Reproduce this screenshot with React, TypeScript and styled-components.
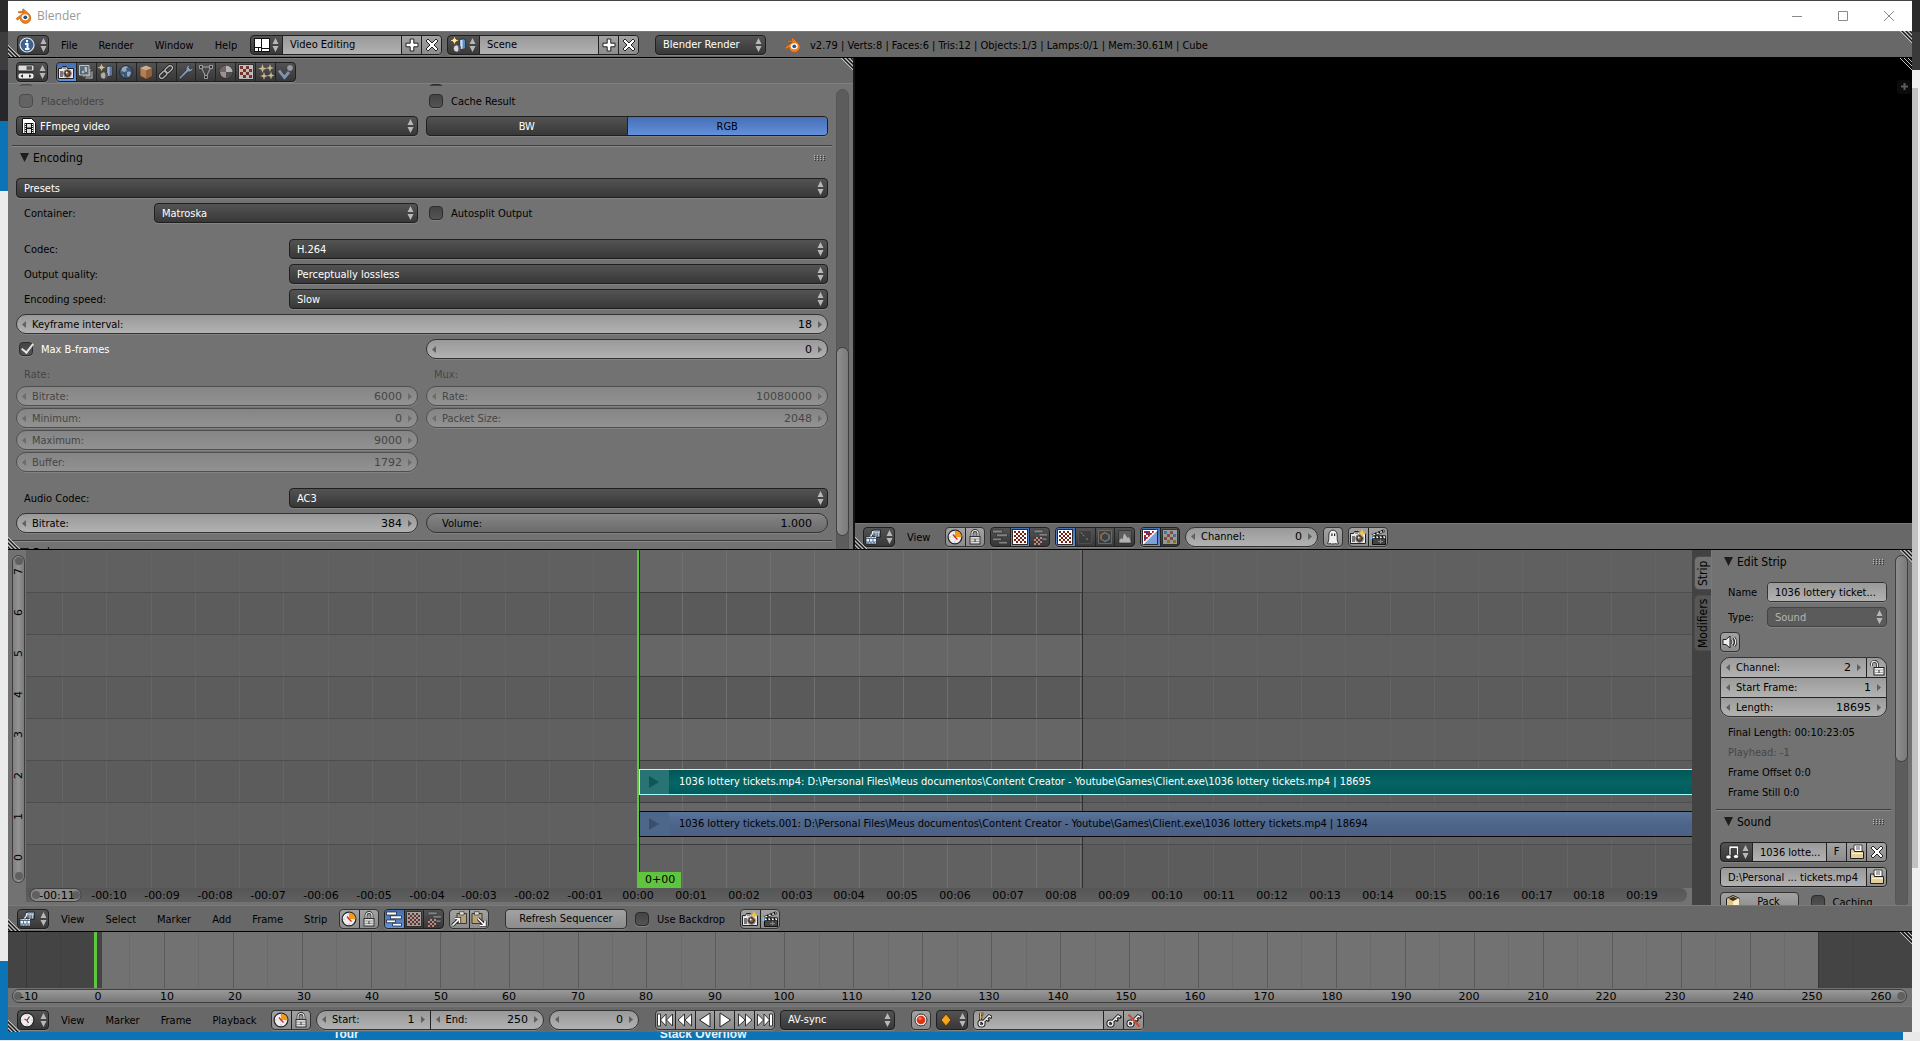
import React from "react";
import styled, { createGlobalStyle, css } from "styled-components";

const UI = '"DejaVu Sans Condensed", "DejaVu Sans", sans-serif';
const NUM = '"DejaVu Sans", sans-serif';

const GlobalStyle = createGlobalStyle`
  * { box-sizing: border-box; }
  body { margin: 0; overflow: hidden; }
  button, input, select { font: inherit; color: inherit; margin: 0; }
`;

/* ---------- desktop and window shell ---------- */

const Desktop = styled.div`
  height: 100vh;
  display: grid;
  grid-template-columns: 8px minmax(0, 1fr) 8px;
  grid-template-rows: minmax(0, 1fr) 8px 1px;
  font-family: ${UI};
  font-size: 11px;
  line-height: 14px;
  color: #000;
  background: #e9e9e9;
`;
const LeftEdge = styled.div`
  background: linear-gradient(#2b2b2b 32px, #3d3d3d 32px 70px, #25272b 70px 121px, #0a74b6 121px 191px, #ebebeb 191px 961px, #0a74b6 961px);
`;
const RightEdge = styled.div`
  background: linear-gradient(#2b2b2b 32px, #393939 32px 70px, #f0f0f0 70px);
`;
const PageScroll = styled.div`
  margin-top: 88px;
  width: 6px;
  height: 780px;
  background: #c1c1c1;
`;
const Window = styled.main`
  display: grid;
  min-width: 0;
  border-top: 1px solid #444;
  grid-template-rows: 30px 27px minmax(0, 492fr) minmax(0, 382fr) 100px;
`;
const Taskbar = styled.footer`
  grid-column: 1 / 4;
  display: flex;
  align-items: flex-end;
  gap: 301px;
  height: 8px;
  margin-right: 17px;
  padding-left: 333px;
  overflow: hidden;
  background: #0a74b6;
  font: bold 12px/12px "Liberation Sans", Arial, sans-serif;
`;
const PageLink = styled.a`
  color: #e8f1f8;
  text-decoration: none;
`;
const TitleBar = styled.header`
  display: flex;
  align-items: center;
  gap: 6px;
  padding: 0 17px 0 7px;
  background: #fff;
  color: #999;
  font: 12px/16px "Open Sans", "Noto Sans", sans-serif;
`;
const WindowButtons = styled.div`
  display: flex;
  gap: 34px;
  margin-left: auto;
`;
const WindowButton = styled.button`
  display: flex;
  padding: 0;
  border: 0;
  background: none;
`;

/* ---------- editors ---------- */

const Area = styled.section`
  position: relative;
  display: flex;
  flex-direction: column;
  min-width: 0;
  min-height: 0;
  border-bottom: 1px solid #000;
`;
const Bar = styled.header<{ $left?: number; $gap?: number }>`
  flex: none;
  display: flex;
  align-items: center;
  gap: ${(p) => p.$gap ?? 5}px;
  height: 26px;
  padding-left: ${(p) => p.$left ?? 9}px;
  background: #686868;
  border-top: 1px solid #7a7a7a;
  white-space: nowrap;
`;
const TabBar = styled(Bar)`
  padding-top: 2px;
  border-bottom: 1px solid #808080;
`;
const Upper = styled.div`
  display: grid;
  min-height: 0;
  grid-template-columns: minmax(0, 847fr) minmax(0, 1057fr);
`;
const PropertiesArea = styled(Area)`
  border-right: 2px solid #151515;
  background: #727272;
`;
const Gap = styled.span<{ $w: number }>`
  flex: 0 0 ${(p) => p.$w}px;
`;
const Menus = styled.nav<{ $w: number }>`
  display: flex;
  flex: 0 0 ${(p) => p.$w}px;
  gap: 21px;
  padding-left: 7px;
`;
const MenuButton = styled.button`
  padding: 2px 0 0;
  border: 0;
  background: none;
`;
const Info = styled.output`
  padding: 2px 0 0 5px;
`;

const dark = css`
  background: linear-gradient(#535353, #383838);
  border: 1px solid #1f1f1f;
  color: #fff;
`;
const light = css`
  background: linear-gradient(#999, #b2b2b2);
  border: 1px solid #333;
  color: #000;
`;
const tool = css`
  background: linear-gradient(#a2a2a2, #8c8c8c);
  border: 1px solid #333;
  color: #000;
`;
const skins = { dark, light, tool };

const Cluster = styled.div<{ $w?: number; $skin?: keyof typeof skins; $round?: number }>`
  display: flex;
  flex: ${(p) => (p.$w ? `0 0 ${p.$w}px` : "1 1 0")};
  min-width: 0;
  height: 20px;
  border-radius: ${(p) => p.$round ?? 4}px;
  overflow: hidden;
  box-shadow: 0 1px 0 #838383;
  ${(p) => skins[p.$skin ?? "dark"]}
  && > * + * { border-left: 1px solid #222; }
`;
const Cell = styled.button<{ $on?: boolean; $skin?: keyof typeof skins; $w?: number; $dim?: boolean }>`
  display: flex;
  align-items: center;
  justify-content: center;
  gap: 2px;
  flex: ${(p) => (p.$w ? `0 0 ${p.$w}px` : "1 1 0")};
  min-width: 0;
  padding: 0;
  background: none;
  ${(p) => p.$skin && skins[p.$skin]}
  border: 0;
  ${(p) => p.$on && css`background: linear-gradient(#466fb4, #6390dc); color: #000;`}
  > svg { opacity: ${(p) => (p.$dim ? 0.72 : 1)}; }
`;
const ChoiceCell = styled(Cell)`
  padding-top: 2px;
`;
const TypeButton = styled.button`
  display: flex;
  align-items: center;
  justify-content: center;
  gap: 5px;
  flex: 0 0 32px;
  height: 20px;
  padding: 0;
  border-radius: 4px;
  box-shadow: 0 1px 0 #838383;
  ${dark}
`;
const NameInput = styled.input`
  flex: 1 1 0;
  min-width: 0;
  padding: 1px 1px 0 7px;
  border: 0;
  background: linear-gradient(#999, #b2b2b2);
  color: #000;
`;
const Push = styled.button<{ $w?: number }>`
  display: flex;
  align-items: center;
  justify-content: center;
  flex: 0 0 ${(p) => p.$w ?? 20}px;
  width: ${(p) => p.$w ?? 20}px;
  height: 20px;
  padding: 0;
  border-radius: 4px;
  box-shadow: 0 1px 0 #838383;
  ${tool}
`;

const SelectBox = styled.span<{ $w?: number; $muted?: boolean }>`
  display: flex;
  align-items: center;
  flex: ${(p) => (p.$w ? `0 0 ${p.$w}px` : "1 1 0")};
  min-width: 0;
  height: 20px;
  padding: 0 3px 0 4px;
  border-radius: 4px;
  box-shadow: 0 1px 0 #838383;
  ${dark}
  ${(p) => p.$muted && css`background: #5b5b5b; border-color: #434343; color: #b5b5b5;`}
`;
const NativeSelect = styled.select`
  appearance: none;
  flex: 1 1 0;
  min-width: 0;
  height: 18px;
  padding: 1px 3px 0;
  border: 0;
  background: none;
  opacity: 1;
`;

const NumberBox = styled.label<{ $w?: number; $muted?: boolean; $flat?: boolean; $plain?: boolean }>`
  display: flex;
  align-items: center;
  flex: ${(p) => (p.$w ? `0 0 ${p.$w}px` : "1 1 0")};
  min-width: 0;
  height: 20px;
  padding: 0 5px;
  border-radius: 10px;
  box-shadow: 0 1px 0 #838383;
  ${light}
  ${(p) => p.$muted && css`background: linear-gradient(#858585, #929292); border-color: #4f4f4f; color: #454545;`}
  ${(p) => p.$plain && css`background: linear-gradient(#858585, #6b6b6b);`}
  ${(p) => p.$flat && css`height: auto; border-width: 0; border-radius: 0; box-shadow: none; background: none;`}
`;
const NumberInput = styled.input`
  flex: 1 1 0;
  min-width: 0;
  padding: 1px 6px 0 0;
  border: 0;
  background: none;
  text-align: right;
  font-family: ${NUM};
`;
const NumberName = styled.span`
  padding: 1px 0 0 6px;
`;
const Arrow = styled.svg<{ $faint?: boolean }>`
  flex: none;
  fill: ${(p) => (p.$faint ? "#6c6c6c" : "#606060")};
`;

const CheckLabel = styled.label<{ $muted?: boolean; $white?: boolean }>`
  display: flex;
  align-items: center;
  flex: 1 1 0;
  gap: 8px;
  min-width: 0;
  height: 20px;
  padding-left: 3px;
  color: ${(p) => (p.$muted ? "#444" : p.$white ? "#fff" : "#000")};
`;
const BackdropLabel = styled(CheckLabel)`
  flex: 0 0 103px;
`;
const CheckBox = styled.input`
  appearance: none;
  flex: none;
  position: relative;
  width: 14px;
  height: 14px;
  border: 1px solid #2c2c2c;
  border-radius: 4px;
  background: linear-gradient(#444, #545454);
  box-shadow: 0 1px 0 #828282;
  &:disabled { background: #636363; border-color: #4c4c4c; }
  &:checked::after {
    content: "";
    position: absolute;
    left: 4px;
    top: -2px;
    width: 5px;
    height: 10px;
    border: solid #e3e3e3;
    border-width: 0 2px 2px 0;
    transform: rotate(38deg);
  }
`;
const CheckText = styled.span`
  padding-top: 2px;
`;

/* ---------- properties ---------- */

const PanelScroll = styled.div`
  flex: 1 1 0;
  min-height: 0;
  display: grid;
  grid-template-columns: minmax(0, 1fr) 13px;
  column-gap: 4px;
  padding-right: 4px;
  overflow: hidden;
`;
const Form = styled.form`
  display: flex;
  flex-direction: column;
  gap: 5px;
  padding: 0 4px 0 8px;
  min-width: 0;
`;
const Row = styled.div`
  display: grid;
  flex: none;
  grid-auto-flow: column;
  grid-auto-columns: minmax(0, 1fr);
  column-gap: 8px;
  min-height: 20px;
`;
const ClippedRow = styled(Row)`
  min-height: 0;
  height: 2px;
  overflow: hidden;
  align-items: end;
  padding: 0 3px;
  column-gap: 14px;
`;
const LabelRow = styled.div`
  display: flex;
  flex: none;
  min-width: 0;
  min-height: 20px;
`;
const Stack = styled.div`
  min-width: 0;
  display: flex;
  flex-direction: column;
  gap: 2px;
  > * { flex: 0 0 20px; }
`;
const FieldLabel = styled.label<{ $part?: number; $muted?: boolean }>`
  display: flex;
  align-items: center;
  flex: ${(p) => (p.$part ? `0 0 ${p.$part}px` : "none")};
  height: 20px;
  padding: 2px 0 0 8px;
  color: ${(p) => (p.$muted ? "#464646" : "#000")};
`;
const PanelTitle = styled.h2<{ $line?: number }>`
  display: flex;
  align-items: center;
  flex: none;
  gap: 4px;
  margin: ${(p) => p.$line ?? 0}px -4px 0;
  height: ${(p) => (p.$line ? 28 : 27)}px;
  padding: 0 7px 4px 8px;
  ${(p) => p.$line && css`
    border-top: 1px solid #3c3c3c;
    box-shadow: inset 0 1px 0 #8a8a8a;
  `}
  font-size: 12px;
  font-weight: normal;
  > :last-child { margin-left: auto; }
`;
const Track = styled.div<{ $pad: string }>`
  margin: ${(p) => p.$pad};
  border-radius: 7px;
  background: #5c5c5c;
  border: 1px solid #565656;
`;
const Thumb = styled.div<{ $top: number; $size: number }>`
  height: ${(p) => p.$size}%;
  margin: ${(p) => p.$top}px -1px 0;
  border: 1px solid #3f3f3f;
  border-radius: 7px;
  background: linear-gradient(90deg, #8f8f8f, #7a7a7a);
`;

/* ---------- preview, sequencer, timeline ---------- */

const Preview = styled.div`
  flex: 1 1 0;
  background: #000;
`;
const Expand = styled.button`
  position: absolute;
  top: 22px;
  right: 1px;
  width: 14px;
  height: 14px;
  padding: 0;
  border: 0;
  border-radius: 4px;
  background: #0b0b0b;
`;
const Corner = styled.svg<{ $at: "tr" | "bl" }>`
  position: absolute;
  width: 12px;
  height: 12px;
  ${(p) => (p.$at === "tr" ? "top: 0; right: 0;" : "bottom: 0; left: 0;")}
`;
const SeqBody = styled.div`
  flex: 1 1 0;
  min-height: 0;
  display: grid;
  grid-template-columns: 18px minmax(0, 1fr) 19px 201px;
  background: #727272;
`;
const ChannelBar = styled.div`
  display: flex;
  flex-direction: column;
  align-items: center;
  gap: 8px;
  margin: 5px 1px 22px 4px;
  padding: 1px 0 2px;
  border: 1px solid #3f3f3f;
  border-radius: 7px;
  background: linear-gradient(90deg, #7f7f7f, #939393, #7a7a7a);
`;
const Channels = styled.ol`
  flex: 1 1 0;
  display: flex;
  flex-direction: column;
  justify-content: space-between;
  margin: -7px 0 0;
  padding: 0;
  list-style: none;
  font-family: ${NUM};
`;
const ChannelName = styled.li`
  height: 12px;
  display: flex;
  justify-content: center;
  writing-mode: vertical-rl;
  transform: rotate(180deg);
  line-height: 12px;
`;
const Knob = styled.span`
  flex: none;
  width: 8px;
  height: 8px;
  border-radius: 50%;
  background: #606060;
`;
const SeqMain = styled.div`
  display: grid;
  grid-template-rows: minmax(0, 1fr) 17px;
  min-width: 0;
`;
const Canvas = styled.div`
  position: relative;
  overflow: hidden;
  background: #5c5c5c;
`;
const Plot = styled.svg`
  display: block;
  width: 100%;
  height: 100%;
  font-family: ${NUM};
  font-size: 11px;
`;
const Strip = styled.button<{ $row: number; $sel?: boolean }>`
  position: absolute;
  left: 613px;
  right: -2px;
  top: ${(p) => 219 + p.$row * 42}px;
  height: 26px;
  display: flex;
  align-items: stretch;
  gap: 10px;
  padding: 0;
  text-align: left;
  white-space: nowrap;
  border: 1px solid ${(p) => (p.$sel ? "#a6ffff" : "#0a0a0a")};
  background: ${(p) => (p.$sel ? "linear-gradient(#015757, #056464 50%, #005c5c)" : "linear-gradient(#5a7398, #4d6589 50%, #4b6084)")};
  color: ${(p) => (p.$sel ? "#fff" : "#000")};
`;
const Handle = styled.span<{ $sel?: boolean }>`
  display: flex;
  flex: 0 0 29px;
  padding-left: 9px;
  align-items: center;
  background: ${(p) => (p.$sel ? "#287474" : "#4d678b")};
`;
const StripText = styled.span`
  align-self: center;
`;
const Playhead = styled.div`
  position: absolute;
  left: 611px;
  top: 0;
  bottom: 0;
  border-left: 2px solid #5fc43e;
  display: flex;
  align-items: flex-end;
`;
const FrameTag = styled.span`
  height: 16px;
  padding: 1px 6px 0;
  background: #5fc43e;
  font-family: ${NUM};
`;
const SeqRuler = styled.div`
  margin-right: 5px;
  height: 14px;
  border-radius: 0 7px 7px 0;
  background: linear-gradient(#565656, #606060);
`;
const Tabs = styled.div`
  display: flex;
  flex-direction: column;
  gap: 5px;
  padding: 6px 0 0 2px;
  background: #424242;
`;
const Tab = styled.button<{ $on?: boolean; $h: number }>`
  height: ${(p) => p.$h}px;
  padding: 0;
  writing-mode: vertical-rl;
  transform: rotate(180deg);
  border: 1px solid #4d4d4d;
  border-left: 0;
  border-radius: 0 5px 5px 0;
  background: ${(p) => (p.$on ? "#727272" : "#565656")};
  font-size: 12px;
`;
const Side = styled.aside`
  display: grid;
  min-height: 0;
  overflow: hidden;
  grid-template-columns: minmax(0, 1fr) 13px;
  column-gap: 4px;
  padding-right: 4px;
  border-left: 1px solid #7a7a7a;
`;
const Triple = styled.div`
  flex: none;
  display: grid;
  grid-template-columns: minmax(0, 1fr);
  grid-template-rows: 19px 20px 19px;
  border-radius: 10px;
  overflow: hidden;
  box-shadow: 0 1px 0 #838383;
  border: 1px solid #333;
`;
const TripleRow = styled.div`
  display: flex;
  min-width: 0;
  background: linear-gradient(#9c9c9c, #b2b2b2);
  & + & { border-top: 1px solid #222; }
  && > * + * { border-left: 1px solid #222; }
`;
const Facts = styled.div`
  display: flex;
  flex-direction: column;
  flex: none;
`;
const TimeBody = styled.div`
  flex: none;
  height: 56px;
  background: #444;
`;
const TimeRuler = styled.div`
  flex: none;
  height: 18px;
  padding: 1px 5px 3px 4px;
  background: #727272;
`;
const TimePill = styled.div`
  height: 14px;
  border: 1px solid #3f3f3f;
  border-radius: 7px;
  background: linear-gradient(#999, #777);
`;
const TimelineArea = styled(Area)`
  border-bottom: 0;
`;
const KeyInput = styled.input`
  &&& { border: 0; }
  flex: 1 1 0;
  min-width: 0;
  background: none;
`;
const Glyph = styled.svg`
  flex: none;
`;

/* ---------- icons ---------- */

const UpDown = () => (
  <Glyph width="7" height="14" viewBox="0 0 7 14" aria-hidden="true" fill="#b8b8b8">
    <path d="M3.500 0 6.500 6H.5zM3.500 14 6.500 8H.5z" />
  </Glyph>
);
const Checker = ({ a = "#fff", b = "#7a1f14", x = 2, y = 2, s = 2, n = 6, frame = true }: { a?: string; b?: string; x?: number; y?: number; s?: number; n?: number; frame?: boolean }) => (
  <g shapeRendering="crispEdges">
    {frame && <rect x={x - 2} y={y - 2} width={n * s + 4} height={n * s + 4} fill="#2a2a2a" />}
    {frame && <rect x={x - 1} y={y - 1} width={n * s + 2} height={n * s + 2} fill={a} />}
    <rect x={x} y={y} width={n * s} height={n * s} fill={a} />
    {Array.from({ length: n * n }, (_, i) => {
      const c = i % n, r = Math.floor(i / n);
      return (c + r) % 2 ? null : <rect key={i} x={x + c * s} y={y + r * s} width={s} height={s} fill={b} />;
    })}
  </g>
);
const CameraShape = () => (
  <g>
    <path d="M.5 4.500h3l1-2h4l1 2h6v10H.5z" fill="#e8e8e8" stroke="#222" />
    <path d="M2 7h3v6H2z" fill="#777" />
    <circle cx="9.500" cy="9.500" r="3.900" fill="#333" stroke="#999" />
    <circle cx="9.500" cy="9.500" r="2" fill="#a0522d" />
    <circle cx="8.700" cy="8.500" r=".9" fill="#fff" />
    <path d="M5 3.500h3v1H5z" fill="#444" />
  </g>
);
const ClockShape = ({ slice }: { slice?: boolean }) => (
  <g>
    <circle cx="8" cy="8" r="6.900" fill="#eee" stroke="#222" strokeWidth="1.200" />
    {slice && <path d="M8 8V1.500A6.500 6.500 0 0 1 14.500 8z" fill="#f79a10" />}
    {slice && <path d="M8 8 6 5.500M8 8l2.500 2.500" stroke="#c22" strokeWidth="1.300" />}
    {!slice && <path d="M8 8.500 10.500 4.500M8 8.500l1.500 2.500" stroke="#444" strokeWidth="1.200" />}
    {!slice && <path d="M8 8.500 5.500 7" stroke="#c22" strokeWidth="1.200" />}
    <path d="M8 2.500v1M8 12.500v1M2.500 8h1M12.500 8h1" stroke="#999" />
  </g>
);
const FilmShape = () => (
  <g strokeWidth=".7">
    <path d="M7 1.500c3-1 5 0 8.500-.5v7c-2 .5-3 .5-5 .2-1.500 0-2 .8-2.500 1.300z" fill="#5f7690" stroke="#111" />
    <path d="M1 7.500h10.500V15H1z" fill="#e9f2fa" stroke="#111" />
    <path d="M1 9.500h10.500M1 13h10.500M4.500 9.500V13M8 9.500V13M3 7.500v2M6 7.500v2M9 7.500v2M3 13v2M6 13v2M9 13v2" fill="none" stroke="#24476b" />
    <path d="M8.500 2.200h6.500M9 3.700h6M11 3.500v4.500M13.500 3.500v4" fill="none" stroke="#dfe8f0" />
    <path d="M8 2c0 3-1 4-2.500 5.500" fill="none" stroke="#eee" strokeWidth="1.500" />
  </g>
);
const BarsShape = ({ dim }: { dim?: boolean }) => (
  <g fill={dim ? "#999" : "#fff"} stroke={dim ? "#2c2c2c" : "#16263c"} strokeWidth=".8">
    <path d="M.5 1h10v3H.5zM4.500 4.800h11v3h-11zM.5 9h9v2.700H.5zM6.500 12.300h9V15h-9z" />
  </g>
);
const SplitShape = () => (
  <g>
    <path d="M2 1h9v2.700H2zM7 4.500h8.500V7H7zM10 9h5v2.300h-5z" fill="#999" stroke="#2c2c2c" strokeWidth=".6" />
    <Checker a="#c5b5b0" b="#6b2a22" x={2} y={8} s={2} n={4} frame={false} />
  </g>
);
const Star = ({ x, y, r, c = "#f4c542" }: { x: number; y: number; r: number; c?: string }) => (
  <path d={`M${x} ${y - r}L${x + r / 4} ${y - r / 4} ${x + r} ${y} ${x + r / 4} ${y + r / 4} ${x} ${y + r} ${x - r / 4} ${y + r / 4} ${x - r} ${y} ${x - r / 4} ${y - r / 4}z`} fill={c} />
);
const KeyShape = ({ x = 0 }: { x?: number }) => (
  <g transform={`translate(${x} 0)`} fill="none">
    <path d="M5.500 10.500 12 4l2 1M9.500 6.500l1.500 1.500" stroke="#222" strokeWidth="3.200" strokeLinecap="round" />
    <circle cx="4.500" cy="11.500" r="2.600" stroke="#222" strokeWidth="3" />
    <path d="M5.500 10.500 12 4l2 1M9.500 6.500l1.500 1.500" stroke="#eee" strokeWidth="1.500" />
    <circle cx="4.500" cy="11.500" r="2.400" stroke="#eee" strokeWidth="1.400" />
  </g>
);

const icons: Record<string, React.ReactNode> = {
  info: <><circle cx="8" cy="8" r="7" fill="#3c6291" stroke="#dbe6f2" strokeWidth="1.200" /><path d="M8 3v2.200M6 7h2.500v4.500M6 12h4.500" stroke="#fff" strokeWidth="2" fill="none" /></>,
  layout: <g shapeRendering="crispEdges"><path d="M0 1h16v14H0z" fill="#111" /><path d="M1 2h6v8H1zM1 11h3v3H1zM5 11h2v3H5zM8 2h7v9H8zM8 12h7v2H8z" fill="#fff" /></g>,
  plus: <path d="M6.200 2h3.600v4.200H14v3.600H9.800V14H6.200V9.800H2V6.200h4.200z" fill="#fff" stroke="#222" />,
  cross: <path d="M2 4l2-2 4 4 4-4 2 2-4 4 4 4-2 2-4-4-4 4-2-2 4-4z" fill="#fff" stroke="#222" />,
  scene: <><Star x={3.5} y={3.5} r={4} c="#ffdf7a" /><circle cx="3.500" cy="3.500" r="1.800" fill="#ffe9a0" /><path d="M9 2.500q2.700-1.500 5.500 0v9q-2.500 1.500-5.500 0z" fill="#5b8cc8" stroke="#222" strokeWidth=".7" /><path d="M9.300 3h2.200v9H9.300z" fill="#cfe0f5" /><circle cx="6" cy="11.500" r="3.700" fill="#d9d9d9" stroke="#222" strokeWidth=".7" /><path d="M6 7.800a3.700 3.700 0 0 1 0 7.400c2-2 2-5 0-7.400" fill="#555" /></>,
  logo: <><path d="M1 10.500 8.500 5H3.500V3.500h4.700L7 2l1.300-1.200 6 5.200A5.500 5.500 0 1 1 5 10.200L2.500 12.200z" fill="#ef7f1a" stroke="#8c3b00" strokeWidth=".4" /><ellipse cx="10.200" cy="9.300" rx="3.500" ry="3" fill="#fff" /><circle cx="10.300" cy="9.300" r="1.900" fill="#265787" /></>,
  props: <><rect x="0" y="1" width="16" height="6" rx="1.500" fill="#ddd" stroke="#111" strokeWidth=".8" /><path d="M8.500 2.200H14v3.600H8.500z" fill="#555" /><rect x="0" y="9" width="16" height="6" rx="2" fill="#eee" stroke="#111" strokeWidth=".8" /><path d="M5 10.200v3.600L2.500 12zM11 10.200v3.600l2.500-1.800z" fill="#222" /></>,
  camera: <CameraShape />,
  layers: <><path d="M7 7h8v8H7zM4.500 4.500H13V13H4.500z" fill="#ccc" stroke="#333" strokeWidth=".7" /><path d="M1.500 1.500h9.500v9.500H1.500z" fill="#5d7894" stroke="#eee" /><path d="M6.500 3h2.500v5H6.500z" fill="#dfe9f5" /><circle cx="5" cy="8" r="2" fill="#ddd" stroke="#222" strokeWidth=".5" /></>,
  world: <><circle cx="8" cy="8" r="6.500" fill="#39608f" stroke="#16263c" /><path d="M4 4c2-2 5-2 6-1l-2 2 1 2-3 1-2-1-1 2zM9 8c2-1 4 0 4 1l-2 4-2-1zM4 10l2 1v2z" fill="#b7cbe0" /></>,
  cube: <><path d="M8 1.500 14 4v8l-6 3-6-3V4z" fill="#d99663" stroke="#5b3212" strokeWidth=".8" /><path d="M8 1.500 14 4 8 6.500 2 4z" fill="#f5d5b4" /><path d="M8 6.500V15l6-3V4z" fill="#b36a35" /></>,
  link: <g fill="none" stroke="#111" strokeWidth="3"><rect x="1" y="8.500" width="8.500" height="4.500" rx="2.200" transform="rotate(-45 5.250 10.750)" /><rect x="6.500" y="3" width="8.500" height="4.500" rx="2.200" transform="rotate(-45 10.750 5.250)" /><g stroke="#ddd" strokeWidth="1.400"><rect x="1" y="8.500" width="8.500" height="4.500" rx="2.200" transform="rotate(-45 5.250 10.750)" /><rect x="6.500" y="3" width="8.500" height="4.500" rx="2.200" transform="rotate(-45 10.750 5.250)" /></g></g>,
  wrench: <path d="M2.200 15.200.8 13.800 8.200 6C7.500 3.500 9.500.8 12.500 1L10.800 3.500l1.700 1.700L15 3.500C15.300 6.500 12.500 8.500 10 7.800z" fill="#a3bfe6" stroke="#1a2a40" strokeWidth=".8" />,
  mesh: <><path d="M3 3h10L8 13z" fill="none" stroke="#ccc" /><path d="M1.500 1.500h3v3h-3zM11.500 1.500h3v3h-3zM6.500 11.500h3v3h-3z" fill="#222" stroke="#ddd" strokeWidth=".8" /></>,
  material: <><circle cx="8" cy="8" r="6.500" fill="#c9aea4" stroke="#222" /><path d="M8 1.500V8H1.500A6.500 6.500 0 0 1 8 1.500" fill="#777" /><path d="M8 8h6.500A6.500 6.500 0 0 1 8 14.500z" fill="#555" /><path d="M8 1.500A6.500 6.500 0 0 1 14.500 8H8z" fill="#ddd" /></>,
  texture: <Checker a="#eee" b="#8c2f22" s={3} n={4} />,
  particles: <><Star x={4.5} y={4.5} r={4.5} c="#f5e3b0" /><Star x={12} y={4} r={4} c="#f5e3b0" /><Star x={6} y={12} r={4} c="#f5e3b0" /><Star x={13} y={11.5} r={4} c="#f5e3b0" /></>,
  physics: <><path d="M1 6.500 6.500 13.500 11 8" fill="none" stroke="#94b5e0" strokeWidth="2.800" /><circle cx="12" cy="4" r="3.400" fill="#bbb" stroke="#222" strokeWidth=".7" /></>,
  filmfile: <><path d="M1.500.5h9l4 4v11h-13z" fill="#fff" stroke="#111" /><path d="M3.500 5h9v10.500h-9z" fill="#111" /><path d="M6 6h4v3.500H6zM6 11h4v4H6z" fill="#ddd" /><path d="M4.500 6v9M11.500 6v9" stroke="#fff" strokeDasharray="1 1" /></>,
  film: <FilmShape />,
  clockslice: <ClockShape slice />,
  clock: <ClockShape />,
  lock: <><path d="M5 8V4.500a3 3 0 0 1 6 0V8" fill="none" stroke="#333" strokeWidth="2.800" /><path d="M5 8V4.500a3 3 0 0 1 6 0V8" fill="none" stroke="#eee" strokeWidth="1.200" /><rect x="3" y="7.500" width="10" height="7.500" fill="#ddd" stroke="#333" /><path d="M4 10h8M4 12.500h8" stroke="#999" /><path d="M7.500 10h1v3h-1z" fill="#333" /></>,
  unlock: <><path d="M8.500 8V5a3 3 0 0 0-6-1v2" fill="none" stroke="#333" strokeWidth="2.800" /><path d="M8.500 8V5a3 3 0 0 0-6-1v2" fill="none" stroke="#eee" strokeWidth="1.200" /><rect x="5" y="7.500" width="10" height="7.500" fill="#eee" stroke="#222" /><path d="M6 10h8M6 12.500h8" stroke="#aaa" /><path d="M9.500 10h1v3h-1z" fill="#333" /></>,
  bars: <BarsShape />,
  barsdim: <BarsShape dim />,
  split: <SplitShape />,
  checker: <Checker />,
  checkerdim: <Checker a="#c8c0be" b="#6f2f26" />,
  wave: <><path d="M1.500 1.500h13v13h-13z" fill="#3a3a3a" stroke="#555" /><path d="M4 3.500 8 8M9 10h3" stroke="#aaa" strokeDasharray="2 1" /></>,
  vector: <><path d="M1.500 1.500h13v13h-13z" fill="#3d3d3d" stroke="#777" /><path d="M8 3.500l4 2.500v4l-4 2.500-4-2.500V6z" fill="none" stroke="#7d9a5f" strokeWidth="1.300" /><path d="M8 3.500 4 6v4" fill="none" stroke="#c56a4c" strokeWidth="1.300" /><path d="M12 6v4l-4 2.500" fill="none" stroke="#5f8ab5" strokeWidth="1.300" /></>,
  histogram: <><path d="M1.500 1.500h13v13h-13z" fill="#666" stroke="#333" /><path d="M2.500 13.500V11l2-2 1 1.500 1.500-6 2 2 1.500 2.500L12 8l1.500 4v1.500z" fill="#ddd" /></>,
  alpha: <><Checker a="#fff" b="#c02020" /><path d="M4 2h2v2H4zM2 8h2v2H2zM6 4h2v2H6z" fill="#23439c" /><path d="M15 1v14H1z" fill="#7ba0da" /><path d="M1 15 15 1" stroke="#fff" strokeWidth="1.500" /></>,
  color: <><Checker a="#bbb" b="#a04a40" s={3} n={4} /><path d="M2 2h3v3H2zM11 5h3v3h-3z" fill="#3c8ab0" /><path d="M5 11h3v3H5zM11 11h3v3h-3z" fill="#9a8a20" /></>,
  ghost: <><path d="M2.500 14.500C4 12 3.800 9 3.800 6c0-6.500 8.400-6.500 8.400 0 0 3-.3 6 1.300 8.500-1.500 1-2.500 0-3 0s-1.500 1.200-2.500 0c-1 1.200-2 .5-2.500 0s-2 1-3 0z" fill="#eee" stroke="#333" /><path d="M6.300 4.500h1.200v2.500H6.300zM9 4.500h1.200v2.500H9z" fill="#222" /></>,
  cameraplus: <><CameraShape /><Star x={12} y={4} r={4.5} /></>,
  clapper: <><path d="M2.500 7h13v8.500h-13z" fill="#444" stroke="#111" /><path d="M2.500 7h13v2.500h-13z" fill="#fff" stroke="#111" strokeWidth=".7" /><path d="M5 7l1 2.500M8.500 7l1 2.500M12 7l1 2.500" stroke="#111" strokeWidth="1.600" /><path d="M2 5.500 14 .8l1 2L3 7z" fill="#fff" stroke="#111" strokeWidth=".7" /><path d="M5 4l1.500 1.500M8.500 2.500 10 4M12 1l1 2" stroke="#111" strokeWidth="1.600" /><path d="M.5 6h2v4h-2z" fill="#7cc5ee" /><path d="M8 12.500h5M10.500 10.500v4" stroke="#888" /></>,
  copy: <><path d="M6 2.500h9.500v10H6z" fill="#b5a27a" stroke="#222" strokeWidth=".8" /><path d="M8.500.7H13V4H8.500z" fill="#ddd" stroke="#222" strokeWidth=".6" /><path d="M1.500 14.500 8 8M4 7.500h4.500V12" fill="none" stroke="#222" strokeWidth="3.200" /><path d="M1.500 14.500 8 8M4 7.500h4.500V12" fill="none" stroke="#fff" strokeWidth="1.600" /></>,
  paste: <><path d="M1 2.500h10v10H1z" fill="#b5a27a" stroke="#222" strokeWidth=".8" /><path d="M3.500.7H8V4H3.500z" fill="#ddd" stroke="#222" strokeWidth=".6" /><path d="M7 7.500l6.500 6.500M9 14.500h5V9.500" fill="none" stroke="#222" strokeWidth="3.200" /><path d="M7 7.500l6.500 6.500M9 14.500h5V9.500" fill="none" stroke="#fff" strokeWidth="1.600" /></>,
  speaker: <><path d="M1 5.500h3L8 2v12l-4-3.500H1z" fill="#eee" stroke="#222" /><path d="M10 5.500q2 2.500 0 5M12 3.500q3.500 4.500 0 9" fill="none" stroke="#222" strokeWidth="2.600" /><path d="M10 5.500q2 2.500 0 5M12 3.500q3.500 4.500 0 9" fill="none" stroke="#eee" strokeWidth="1.200" /></>,
  note: <g stroke="#111" strokeWidth=".6"><path d="M5 2h9.500v10.500h-2V4.500H7v9H5z" fill="#fff" /><ellipse cx="4.500" cy="13" rx="2.700" ry="2" fill="#fff" /><ellipse cx="12" cy="12.500" rx="2.600" ry="2" fill="#fff" /></g>,
  folder: <><path d="M5 1h8v8H5z" fill="#fff" stroke="#222" strokeWidth=".8" /><path d="M7 3h4M7 5h4" stroke="#555" /><path d="M1.500 5h3l1 2.500h9v7h-13z" fill="#e3cf9a" stroke="#222" /><path d="M3 9.500h11" stroke="#fff3cf" /></>,
  pack: <><path d="M8 1.500 14.500 4.500v7L8 15l-6.500-3.500v-7z" fill="#ddc48d" stroke="#222" /><path d="M3.500 4.700 8 2.800l4.500 1.900L8 7z" fill="#3d3420" /><path d="M8 7.500V15l6.500-3.500v-7z" fill="#fff0cc" /></>,
  first: <g fill="#fff" stroke="#222" strokeWidth=".9"><path d="M.5 2h3v12h-3zM9 2v12L3.500 8zM15.500 2v12L9.500 8z" /></g>,
  rewind: <g fill="#fff" stroke="#222" strokeWidth=".9"><path d="M7.500 2v12L1 8zM14.500 2v12L8 8z" /></g>,
  back: <path d="M13 1v14L2.500 8z" fill="#fff" stroke="#222" />,
  play: <path d="M3 1v14l10.500-7z" fill="#fff" stroke="#222" />,
  forward: <g fill="#fff" stroke="#222" strokeWidth=".9"><path d="M8.500 2v12L15 8zM1.500 2v12L8 8z" /></g>,
  last: <g fill="#fff" stroke="#222" strokeWidth=".9"><path d="M12.500 2h3v12h-3zM7 2v12l5.500-6zM.5 2v12l6-6z" /></g>,
  record: <><circle cx="8" cy="8" r="6" fill="#eee" stroke="#333" /><circle cx="8" cy="8" r="4.300" fill="#e03314" /><circle cx="7" cy="6.500" r="1.500" fill="#f5785a" /></>,
  diamond: <path d="M8 2l5 6-5 6-5-6z" fill="#f7a51d" stroke="#5c3500" />,
  keyset: <><path d="M4.500 1v9M4.500 2h3M4.500 5h2" stroke="#222" strokeWidth="2.600" /><path d="M4.500 1v9M4.500 2h3M4.500 5h2" stroke="#e8c070" strokeWidth="1.200" /><KeyShape x={1} /></>,
  key: <KeyShape />,
  keydel: <><KeyShape /><path d="M2.500 2.500l11 12" stroke="#d8452c" strokeWidth="2" /></>,
};
const Icon = ({ name }: { name: string }) => <Glyph width="16" height="16" viewBox="0 0 16 16" aria-hidden="true">{icons[name]}</Glyph>;

/* ---------- composed controls ---------- */

const Left = ({ faint }: { faint?: boolean }) => <Arrow $faint={faint} width="4" height="7" viewBox="0 0 4 7" aria-hidden="true"><path d="M4 0v7L0 3.500z" /></Arrow>;
const Right = ({ faint }: { faint?: boolean }) => <Arrow $faint={faint} width="4" height="7" viewBox="0 0 4 7" aria-hidden="true"><path d="M0 0v7L4 3.500z" /></Arrow>;

const NumberField = ({ name, value, w, muted, flat, plain }: { name?: string; value: string; w?: number; muted?: boolean; flat?: boolean; plain?: boolean }) => (
  <NumberBox $w={w} $muted={muted} $flat={flat} $plain={plain}>
    {plain ? <Gap $w={4} /> : <Left faint={muted} />}
    {name && <NumberName>{name}</NumberName>}
    <NumberInput defaultValue={value} disabled={muted} aria-label={name ?? "Value"} />
    {plain ? <Gap $w={4} /> : <Right faint={muted} />}
  </NumberBox>
);
const Dropdown = ({ value, w, id, icon, muted }: { value: string; w?: number; id?: string; icon?: string; muted?: boolean }) => (
  <SelectBox $w={w} $muted={muted}>
    {icon && <Icon name={icon} />}
    <NativeSelect id={id} aria-label={id ? undefined : value} disabled={muted}><option>{value}</option></NativeSelect>
    <UpDown />
  </SelectBox>
);
const Check = ({ text, on, muted }: { text: string; on?: boolean; muted?: boolean }) => (
  <CheckLabel $muted={muted} $white={on}>
    <CheckBox type="checkbox" defaultChecked={on} disabled={muted} />
    <CheckText>{text}</CheckText>
  </CheckLabel>
);
const EditorType = ({ icon }: { icon: string }) => <TypeButton aria-label="Editor type"><Icon name={icon} /><UpDown /></TypeButton>;
const IconSet = ({ names, on, skin = "dark" }: { names: string[]; on?: number; skin?: keyof typeof skins }) => (
  <Cluster $skin={skin} $w={names.length * 20}>
    {names.map((n, i) => <Cell key={i} type="button" aria-label={n} $on={i === on} $dim={skin === "dark" && i !== on}><Icon name={n} /></Cell>)}
  </Cluster>
);
const MenuRow = ({ items, w }: { items: string[]; w: number }) => (
  <Menus $w={w}>{items.map((m) => <MenuButton key={m}>{m}</MenuButton>)}</Menus>
);
const Datablock = ({ icon, value }: { icon: string; value: string }) => (
  <Cluster $w={192}>
    <Cell $w={31} aria-label={`Browse ${value}`}><Icon name={icon} /><UpDown /></Cell>
    <NameInput defaultValue={value} aria-label={value} />
    <Cell $w={20} $skin="tool" aria-label="Add"><Icon name="plus" /></Cell>
    <Cell $w={20} $skin="tool" aria-label="Delete"><Icon name="cross" /></Cell>
  </Cluster>
);
const Grip = () => (
  <Glyph width="11" height="6" viewBox="0 0 11 6" aria-hidden="true">
    {[0, 3, 6, 9].map((x) => [0, 2, 4].map((y) => <g key={x + "-" + y}><rect x={x} y={y} width="1" height="1" fill="#bbb" /><rect x={x + 1} y={y + 1} width="1" height="1" fill="#333" /></g>))}
  </Glyph>
);
const Title = ({ text, line }: { text: string; line?: number }) => (
  <PanelTitle $line={line}>
    <Glyph width="9" height="9" viewBox="0 0 9 9" aria-hidden="true"><path d="M0 0h9L4.500 9z" fill="#1d1d1d" /></Glyph>
    {text}
    <Grip />
  </PanelTitle>
);
const CornerGrip = ({ at }: { at: "tr" | "bl" }) => (
  <Corner $at={at} viewBox="0 0 12 12" aria-hidden="true">
    {[0, 4, 8].map((o) => at === "tr"
      ? <g key={o}><path d={`M${o} 0L12 ${12 - o}`} stroke="#c4c4c4" /><path d={`M${o + 2} 0L12 ${10 - o}`} stroke="#151515" /></g>
      : <g key={o}><path d={`M0 ${o}L${12 - o} 12`} stroke="#c4c4c4" /><path d={`M0 ${o + 2}L${10 - o} 12`} stroke="#151515" /></g>)}
  </Corner>
);

/* ---------- charts ---------- */

const seqLines = Array.from({ length: 40 }, (_, i) => Math.round(36 + i * 44.25));
const SequencerGrid = () => (
  <Plot>
    {[0, 84, 168, 252].map((y) => <rect key={y} y={y} width="100%" height="42" fill="#606060" />)}
    <rect x="613" width="443" height="100%" fill="#5a5a5a" />
    {[0, 84, 168, 252].map((y) => <rect key={y} x="613" y={y} width="443" height="42" fill="#666" />)}
    <rect x="613" y="294" width="443" height="50" fill="#616161" />
    {seqLines.map((x) => <rect key={x} x={x} width="1" height="100%" fill={x > 613 && x < 1056 ? "#707070" : "#656565"} />)}
    {[42, 84, 126, 168, 210, 252, 294].map((y) => (
      <g key={y}><rect y={y} width="100%" height="1" fill="#4d4d4d" /><rect x="613" y={y} width="443" height="1" fill="#3d3d3d" /></g>
    ))}
    <rect x="613" width="1" height="100%" fill="#2e2e2e" />
    <rect x="1056" width="1" height="100%" fill="#303030" />
  </Plot>
);
const stamp = (n: number) => `${n < 0 ? "-" : ""}00:${String(Math.abs(n)).padStart(2, "0")}`;
const SequencerRuler = () => (
  <SeqRuler>
    <Plot>
      <rect x="4" y="0.500" width="51" height="13" rx="6.500" fill="#8a8a8a" stroke="#3f3f3f" />
      <circle cx="10" cy="7" r="4" fill="#606060" />
      <circle cx="50" cy="7" r="4" fill="#606060" />
      {Array.from({ length: 31 }, (_, i) => i - 11).map((n) => (
        <text key={n} x={Math.round(612 + n * 52.86)} y="11" textAnchor="middle">{stamp(n)}</text>
      ))}
    </Plot>
  </SeqRuler>
);
const TimelineGrid = () => (
  <TimeBody>
    <Plot>
      <rect x="94" width="1716" height="100%" fill="#727272" />
      {Array.from({ length: 54 }, (_, i) => {
        const x = Math.round(18 + i * 34.47);
        const inside = x > 94 && x < 1809;
        return <rect key={i} x={x} width="1" height="100%" fill={i % 2 ? (inside ? "#6a6a6a" : "#3f3f3f") : inside ? "#5a5a5a" : "#373737"} />;
      })}
      <rect x="86" width="3" height="100%" fill="#5fc43e" />
    </Plot>
  </TimeBody>
);
const TimelineRuler = () => (
  <TimeRuler>
    <TimePill>
      <Plot>
        <circle cx="5" cy="6" r="4" fill="#606060" />
        <circle cx="99.750%" cy="6" r="4" fill="#606060" />
        {Array.from({ length: 28 }, (_, i) => i - 1).map((n) => (
          <text key={n} x={Math.round(85 + n * 68.56)} y="10" textAnchor="middle">{n * 10}</text>
        ))}
      </Plot>
    </TimePill>
  </TimeRuler>
);

/* ---------- page ---------- */

const PropertiesEditor = () => (
  <PropertiesArea>
    <TabBar $left={8} $gap={8}>
      <EditorType icon="props" />
      <IconSet names={["camera", "layers", "scene", "world", "cube", "link", "wrench", "mesh", "material", "texture", "particles", "physics"]} on={0} />
    </TabBar>
    <PanelScroll>
      <Form>
        <ClippedRow>
          <CheckBox type="checkbox" disabled aria-label="Overwrite" />
          <CheckBox type="checkbox" aria-label="File Extensions" />
        </ClippedRow>
        <Row><Check text="Placeholders" muted /><Check text="Cache Result" /></Row>
        <Row>
          <Dropdown icon="filmfile" value="FFmpeg video" />
          <Cluster><ChoiceCell type="button">BW</ChoiceCell><ChoiceCell type="button" $on>RGB</ChoiceCell></Cluster>
        </Row>
        <Title text="Encoding" line={4} />
        <Row><Dropdown value="Presets" /></Row>
        <Row>
          <LabelRow><FieldLabel htmlFor="container" $part={138}>Container:</FieldLabel><Dropdown id="container" value="Matroska" /></LabelRow>
          <Check text="Autosplit Output" />
        </Row>
        <Gap $w={6} />
        <LabelRow><FieldLabel htmlFor="codec" $part={273}>Codec:</FieldLabel><Dropdown id="codec" value="H.264" /></LabelRow>
        <LabelRow><FieldLabel htmlFor="quality" $part={273}>Output quality:</FieldLabel><Dropdown id="quality" value="Perceptually lossless" /></LabelRow>
        <LabelRow><FieldLabel htmlFor="speed" $part={273}>Encoding speed:</FieldLabel><Dropdown id="speed" value="Slow" /></LabelRow>
        <Row><NumberField name="Keyframe interval:" value="18" /></Row>
        <Row><Check text="Max B-frames" on /><NumberField value="0" /></Row>
        <Row>
          <Stack>
            <FieldLabel as="span" $muted>Rate:</FieldLabel>
            <NumberField name="Bitrate:" value="6000" muted />
            <NumberField name="Minimum:" value="0" muted />
            <NumberField name="Maximum:" value="9000" muted />
            <NumberField name="Buffer:" value="1792" muted />
          </Stack>
          <Stack>
            <FieldLabel as="span" $muted>Mux:</FieldLabel>
            <NumberField name="Rate:" value="10080000" muted />
            <NumberField name="Packet Size:" value="2048" muted />
          </Stack>
        </Row>
        <Gap $w={6} />
        <LabelRow><FieldLabel htmlFor="audio" $part={273}>Audio Codec:</FieldLabel><Dropdown id="audio" value="AC3" /></LabelRow>
        <Row><NumberField name="Bitrate:" value="384" /><NumberField name="Volume:" value="1.000" plain /></Row>
        <Title text="Bake" line={2} />
      </Form>
      <Track $pad="5px 0 4px"><Thumb $top={257} $size={40} /></Track>
    </PanelScroll>
    <CornerGrip at="tr" />
    <CornerGrip at="bl" />
  </PropertiesArea>
);

const PreviewEditor = () => (
  <Area>
    <Preview />
    <Expand aria-label="Show sidebar">
      <svg width="7" height="7" viewBox="0 0 7 7"><path d="M2.500 0h2v2.500H7v2H4.500V7h-2V4.500H0v-2h2.500z" fill="#5c5c5c" /></svg>
    </Expand>
    <Bar $left={8}>
      <EditorType icon="film" />
      <MenuRow items={["View"]} w={40} />
      <IconSet skin="tool" names={["clockslice", "lock"]} />
      <IconSet names={["barsdim", "checker", "split"]} on={1} />
      <IconSet names={["checker", "wave", "vector", "histogram"]} on={0} />
      <IconSet names={["alpha", "color"]} on={0} />
      <NumberField w={133} name="Channel:" value="0" />
      <Push aria-label="Ghost"><Icon name="ghost" /></Push>
      <IconSet skin="tool" names={["cameraplus", "clapper"]} />
    </Bar>
    <CornerGrip at="tr" />
    <CornerGrip at="bl" />
  </Area>
);

const SidePanel = () => (
  <Side>
    <Form>
      <Title text="Edit Strip" />
      <LabelRow><FieldLabel htmlFor="name" $part={47}>Name</FieldLabel><Cluster $skin="light"><NameInput id="name" defaultValue="1036 lottery ticket..." /></Cluster></LabelRow>
      <LabelRow><FieldLabel htmlFor="type" $part={47}>Type:</FieldLabel><Dropdown id="type" value="Sound" muted /></LabelRow>
      <LabelRow><Push type="button" aria-label="Mute"><Icon name="speaker" /></Push></LabelRow>
      <Triple>
        <TripleRow><NumberField flat name="Channel:" value="2" /><Cell type="button" $w={20} aria-label="Lock"><Icon name="unlock" /></Cell></TripleRow>
        <TripleRow><NumberField flat name="Start Frame:" value="1" /></TripleRow>
        <TripleRow><NumberField flat name="Length:" value="18695" /></TripleRow>
      </Triple>
      <Facts>
        <FieldLabel as="span">Final Length: 00:10:23:05</FieldLabel>
        <FieldLabel as="span" $muted>Playhead: -1</FieldLabel>
        <FieldLabel as="span">Frame Offset 0:0</FieldLabel>
        <FieldLabel as="span">Frame Still 0:0</FieldLabel>
      </Facts>
      <Title text="Sound" line={2} />
      <LabelRow>
        <Cluster>
          <Cell type="button" $w={31} aria-label="Browse sound"><Icon name="note" /><UpDown /></Cell>
          <NameInput defaultValue="1036 lotte..." aria-label="Sound" />
          <Cell type="button" $w={20} $skin="tool">F</Cell>
          <Cell type="button" $w={20} $skin="tool" aria-label="Open"><Icon name="folder" /></Cell>
          <Cell type="button" $w={20} $skin="tool" aria-label="Unlink"><Icon name="cross" /></Cell>
        </Cluster>
      </LabelRow>
      <LabelRow>
        <Cluster>
          <NameInput defaultValue="D:\Personal ... tickets.mp4" aria-label="Path" />
          <Cell type="button" $w={20} $skin="tool" aria-label="Open"><Icon name="folder" /></Cell>
        </Cluster>
      </LabelRow>
      <Row><Push type="button" $w={79}><Icon name="pack" /><Gap $w={16} />Pack<Gap $w={14} /></Push><Check text="Caching" /></Row>
    </Form>
    <Track $pad="5px 0 4px"><Thumb $top={-1} $size={59} /></Track>
  </Side>
);

const SequencerEditor = () => (
  <Area>
    <SeqBody>
      <ChannelBar>
        <Knob />
        <Channels>
          {[7, 6, 5, 4, 3, 2, 1, 0].map((n) => <ChannelName key={n}>{n}</ChannelName>)}
        </Channels>
        <Knob />
      </ChannelBar>
      <SeqMain>
        <Canvas>
          <SequencerGrid />
          <Strip $row={0} $sel>
            <Handle $sel><svg width="10" height="12" viewBox="0 0 10 12" aria-hidden="true"><path d="M0 0v12l10-6z" fill="#0d5757" /></svg></Handle>
            <StripText>1036 lottery tickets.mp4: D:\Personal Files\Meus documentos\Content Creator - Youtube\Games\Client.exe\1036 lottery tickets.mp4 | 18695</StripText>
          </Strip>
          <Strip $row={1}>
            <Handle><svg width="10" height="12" viewBox="0 0 10 12" aria-hidden="true"><path d="M0 0v12l10-6z" fill="#3a4f6d" /></svg></Handle>
            <StripText>1036 lottery tickets.001: D:\Personal Files\Meus documentos\Content Creator - Youtube\Games\Client.exe\1036 lottery tickets.mp4 | 18694</StripText>
          </Strip>
          <Playhead><FrameTag>0+00</FrameTag></Playhead>
        </Canvas>
        <SequencerRuler />
      </SeqMain>
      <Tabs>
        <Tab $on $h={34}>Strip</Tab>
        <Tab $h={56}>Modifiers</Tab>
      </Tabs>
      <SidePanel />
    </SeqBody>
    <Bar>
      <EditorType icon="film" />
      <MenuRow items={["View", "Select", "Marker", "Add", "Frame", "Strip"]} w={280} />
      <IconSet skin="tool" names={["clockslice", "lock"]} />
      <IconSet names={["bars", "checkerdim", "split"]} on={0} />
      <IconSet skin="tool" names={["copy", "paste"]} />
      <Gap $w={6} />
      <Push $w={122}>Refresh Sequencer</Push>
      <BackdropLabel><CheckBox type="checkbox" /><CheckText>Use Backdrop</CheckText></BackdropLabel>
      <IconSet skin="tool" names={["cameraplus", "clapper"]} />
    </Bar>
    <CornerGrip at="tr" />
    <CornerGrip at="bl" />
  </Area>
);

const TimelineEditor = () => (
  <TimelineArea>
    <TimelineGrid />
    <TimelineRuler />
    <Bar>
      <EditorType icon="clock" />
      <MenuRow items={["View", "Marker", "Frame", "Playback"]} w={212} />
      <IconSet skin="tool" names={["clockslice", "lock"]} />
      <Cluster $skin="light" $round={10} $w={228}>
        <NumberField flat name="Start:" value="1" />
        <NumberField flat name="End:" value="250" />
      </Cluster>
      <NumberField w={90} value="0" />
      <Gap $w={6} />
      <IconSet skin="tool" names={["first", "rewind", "back", "play", "forward", "last"]} />
      <Dropdown w={115} value="AV-sync" />
      <Gap $w={6} />
      <Push aria-label="Record"><Icon name="record" /></Push>
      <TypeButton aria-label="Keyframe type"><Icon name="diamond" /><UpDown /></TypeButton>
      <Cluster $skin="light" $w={171}>
        <Cell $w={20} aria-label="Keying set"><Icon name="keyset" /></Cell>
        <KeyInput aria-label="Active keying set" />
        <Cell $w={20} $skin="tool" aria-label="Insert keyframes"><Icon name="key" /></Cell>
        <Cell $w={20} $skin="tool" aria-label="Delete keyframes"><Icon name="keydel" /></Cell>
      </Cluster>
    </Bar>
    <CornerGrip at="tr" />
    <CornerGrip at="bl" />
  </TimelineArea>
);

export default function App() {
  return (
    <Desktop>
      <GlobalStyle />
      <LeftEdge />
      <Window>
        <TitleBar>
          <Icon name="logo" />
          Blender
          <WindowButtons>
            <WindowButton aria-label="Minimize"><svg width="12" height="12"><path d="M1 6.500h10" stroke="#8a8a8a" /></svg></WindowButton>
            <WindowButton aria-label="Maximize"><svg width="12" height="12"><path d="M1.500 1.500h9v9h-9z" fill="none" stroke="#8a8a8a" /></svg></WindowButton>
            <WindowButton aria-label="Close"><svg width="12" height="12"><path d="M1 1l10 10M11 1 1 11" stroke="#8a8a8a" /></svg></WindowButton>
          </WindowButtons>
        </TitleBar>
        <Area>
          <Bar>
            <EditorType icon="info" />
            <MenuRow items={["File", "Render", "Window", "Help"]} w={191} />
            <Datablock icon="layout" value="Video Editing" />
            <Datablock icon="scene" value="Scene" />
            <Gap $w={6} />
            <Dropdown w={111} value="Blender Render" />
            <Gap $w={8} />
            <Icon name="logo" />
            <Info>v2.79 | Verts:8 | Faces:6 | Tris:12 | Objects:1/3 | Lamps:0/1 | Mem:30.61M | Cube</Info>
          </Bar>
          <CornerGrip at="tr" />
          <CornerGrip at="bl" />
        </Area>
        <Upper>
          <PropertiesEditor />
          <PreviewEditor />
        </Upper>
        <SequencerEditor />
        <TimelineEditor />
      </Window>
      <RightEdge><PageScroll /></RightEdge>
      <Taskbar><PageLink href="#tour">Tour</PageLink><PageLink href="#so">Stack Overflow</PageLink></Taskbar>
    </Desktop>
  );
}
